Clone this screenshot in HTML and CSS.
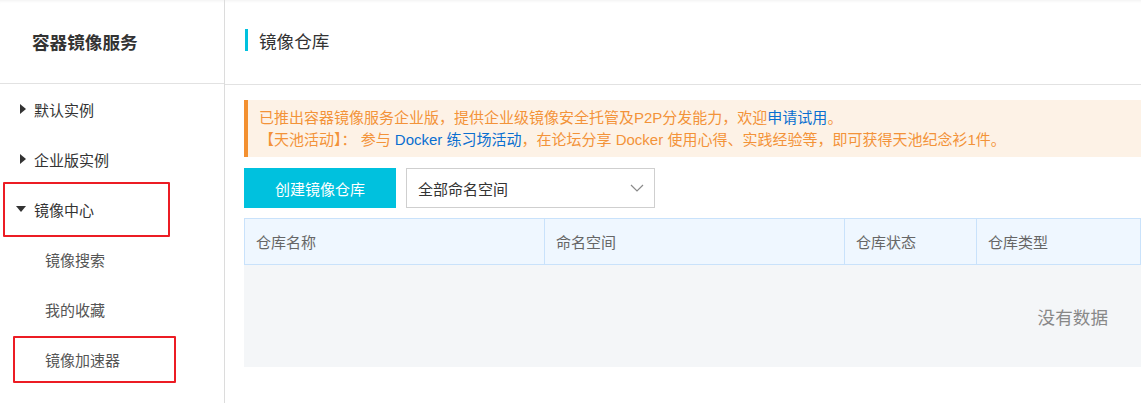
FILE: index.html
```html
<!DOCTYPE html>
<html lang="zh-CN">
<head>
<meta charset="utf-8">
<title>镜像仓库</title>
<link rel="stylesheet" href="styles.css">
</head>
<body>
<div class="app">
  <aside class="sidebar">
    <div class="brand">容器镜像服务</div>
    <ul class="menu">
      <li class="item"><span class="tri tri-right"></span>默认实例</li>
      <li class="item"><span class="tri tri-right"></span>企业版实例</li>
      <li class="item marked marked-a"><span class="tri tri-down"></span>镜像中心</li>
      <li class="item sub">镜像搜索</li>
      <li class="item sub">我的收藏</li>
      <li class="item sub marked marked-b">镜像加速器</li>
    </ul>
  </aside>
  <main class="main">
    <header class="page-head"><span class="bar"></span><h1 class="title">镜像仓库</h1></header>
    <section class="content">
      <div class="notice">
        <p>已推出容器镜像服务企业版，提供企业级镜像安全托管及P2P分发能力，欢迎<a class="link">申请试用</a>。</p>
        <p>【天池活动】： 参与 <a class="link">Docker 练习场活动</a>，在论坛分享 Docker 使用心得、实践经验等，即可获得天池纪念衫1件。</p>
      </div>
      <div class="toolbar">
        <button class="btn-primary">创建镜像仓库</button>
        <div class="select">
          <span>全部命名空间</span>
          <svg class="chev" width="14" height="8" viewBox="0 0 14 8"><path d="M1 1 L7 7 L13 1" fill="none" stroke="#8a8a8a" stroke-width="1.2"/></svg>
        </div>
      </div>
      <div class="table">
        <div class="thead">
          <div class="th c1">仓库名称</div>
          <div class="th c2">命名空间</div>
          <div class="th c3">仓库状态</div>
          <div class="th c4">仓库类型</div>
        </div>
        <div class="tbody"><span class="empty">没有数据</span></div>
      </div>
    </section>
  </main>
</div>
</body>
</html>
```
FILE: styles.css
```css
*, *::before, *::after { box-sizing: border-box; }
html, body { margin: 0; padding: 0; }
body {
  font-family: "Liberation Sans", "Noto Sans CJK SC", sans-serif;
  font-size: 15px;
  color: #333;
  background: #fff;
  width: 1141px;
  height: 403px;
  overflow: hidden;
}
.app {
  display: flex;
  height: 403px;
  box-shadow: inset 0 3px 3px -2px rgba(0,0,0,0.06);
}
.sidebar {
  width: 225px;
  flex: none;
  border-right: 1px solid #dcdcdc;
}
.brand {
  height: 84px;
  border-bottom: 1px solid #e2e2e2;
  padding-left: 32px;
  display: flex;
  align-items: center;
  font-size: 17.6px;
  font-weight: bold;
  color: #333;
}
.menu { list-style: none; margin: 0; padding: 0; }
.item {
  height: 50px;
  display: flex;
  align-items: center;
  padding-left: 20px;
  color: #333;
  font-size: 15px;
  position: relative;
}
.item.sub { padding-left: 45px; color: #555; }
.tri { display: inline-block; width: 0; height: 0; margin-right: 8px; }
.tri-right {
  border-top: 5px solid transparent;
  border-bottom: 5px solid transparent;
  border-left: 6px solid #333;
}
.tri-down {
  border-left: 5px solid transparent;
  border-right: 5px solid transparent;
  border-top: 6px solid #333;
  margin-left: -4px;
}
.marked::after {
  content: "";
  position: absolute;
  border: 2px solid #ec1c24;
  border-radius: 1px;
}
.marked-a::after { left: 3px; top: -2px; width: 167px; height: 55px; }
.marked-b::after { left: 13px; top: 2px; width: 163px; height: 47px; }

.main { flex: 1; min-width: 0; }
.page-head {
  height: 85px;
  border-bottom: 1px solid #e2e2e2;
  display: flex;
  align-items: center;
  padding-left: 20px;
  padding-bottom: 4px;
}
.bar { width: 3px; height: 22px; background: #00c1de; margin-right: 11px; }
.title { margin: 0; font-size: 17.6px; font-weight: normal; color: #333; }

.content { padding: 15px 0 0 19px; }
.notice {
  background: #fdf2e6;
  border-left: 4px solid #f39030;
  padding: 7px 0 6px 11px;
  color: #f39339;
  font-size: 15px;
  line-height: 22px;
}
.notice p { margin: 0; white-space: nowrap; }
.link { color: #0a6fd0; text-decoration: none; }

.toolbar { display: flex; gap: 10px; margin-top: 11px; }
.btn-primary {
  width: 152px;
  height: 40px;
  border: none;
  background: #00c1de;
  color: #fff;
  font-family: inherit;
  font-size: 15px;
  padding: 0;
}
.select {
  width: 249px;
  height: 40px;
  border: 1px solid #cfcfcf;
  display: flex;
  align-items: center;
  justify-content: space-between;
  padding: 0 10px 0 11px;
  color: #333;
  font-size: 15px;
}
.chev { display: block; }

.table { margin-top: 10px; width: 897px; }
.thead {
  display: grid;
  grid-template-columns: 299px 300px 132px 1fr;
  height: 47px;
  background: #eff7ff;
  border: 1px solid #c9e2fb;
}
.th {
  display: flex;
  align-items: center;
  padding-left: 11px;
  color: #666;
  font-size: 15px;
  border-left: 1px solid #c9e2fb;
}
.th.c1 { border-left: none; }
.tbody {
  height: 102px;
  background: #f4f6f8;
  display: flex;
  align-items: center;
  justify-content: flex-end;
  padding-right: 33px;
}
.empty { font-size: 17.6px; color: #888; }
```
